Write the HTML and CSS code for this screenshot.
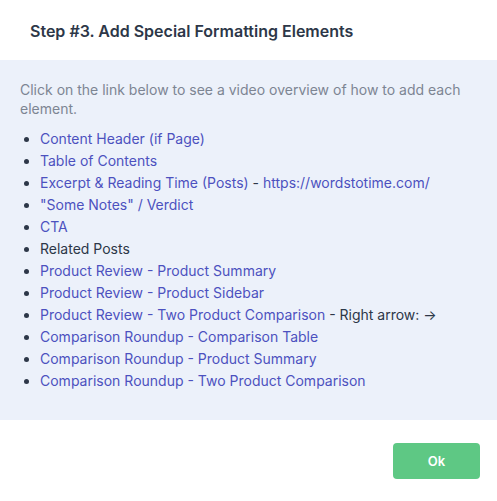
FILE: index.html
```html
<!DOCTYPE html>
<html lang="en">
  <head>
    <meta charset="UTF-8" />
    <meta name="viewport" content="width=device-width, initial-scale=1.0" />
    <title>Step #3</title>
    <link rel="stylesheet" href="styles.css">
  </head>
  <body>
    <div class="modal">
        <div class="modal-header">
            <h2>Step #3. Add Special Formatting Elements</h2>
        </div>

        <div class="modal-body">
            <p class="intro">Click on the link below to see a video overview of how to add each element.</p>
            <ul class="steps">
                <li><a href="#">Content Header (if Page)</a></li>
                <li><a href="#">Table of Contents</a></li>
                <li><a href="#">Excerpt &amp; Reading Time (Posts)</a> - <a href="#">https://wordstotime.com/</a></li>
                <li><a href="#">"Some Notes" / Verdict</a></li>
                <li><a href="#">CTA</a></li>
                <li>Related Posts</li>
                <li><a href="#">Product Review - Product Summary</a></li>
                <li><a href="#">Product Review - Product Sidebar</a></li>
                <li><a href="#">Product Review - Two Product Comparison</a> - Right arrow: &rarr;</li>
                <li><a href="#">Comparison Roundup - Comparison Table</a></li>
                <li><a href="#">Comparison Roundup - Product Summary</a></li>
                <li><a href="#">Comparison Roundup - Two Product Comparison</a></li>
            </ul>
        </div>

        <div class="modal-footer">
            <button class="ok-btn">Ok</button>
        </div>
    </div>
  </body>
</html>
```

FILE: styles.css
```css
* {
    margin: 0;
    padding: 0;
    box-sizing: border-box;
}

body {
    font-family: Inter, 'Noto Sans', sans-serif;
    background: #fff;
    color: #2d3748;
}

.modal {
    width: 497px;
    min-height: 501px;
}

.modal-header {
    height: 60px;
    padding: 20px 30px 0;
}

.modal-header h2 {
    font-size: 16px;
    font-weight: 600;
    line-height: 22px;
    color: #2d3748;
}

.modal-body {
    background: #ecf1fa;
    padding: 20px 20px 29px;
    height: 360px;
}

.intro {
    font-size: 14px;
    line-height: 19px;
    color: #7d8593;
    margin-bottom: 10px;
}

.steps {
    padding-left: 20px;
    font-size: 14px;
    line-height: 22px;
    color: #2d3748;
}

.steps a {
    color: #4c51bf;
    text-decoration: none;
}

.modal-footer {
    display: flex;
    justify-content: flex-end;
    padding: 23px 17px 0;
}

.ok-btn {
    width: 87px;
    height: 36px;
    border: none;
    border-radius: 4px;
    background: #5ec884;
    color: #fff;
    font-family: inherit;
    font-size: 13px;
    font-weight: 600;
}
```
